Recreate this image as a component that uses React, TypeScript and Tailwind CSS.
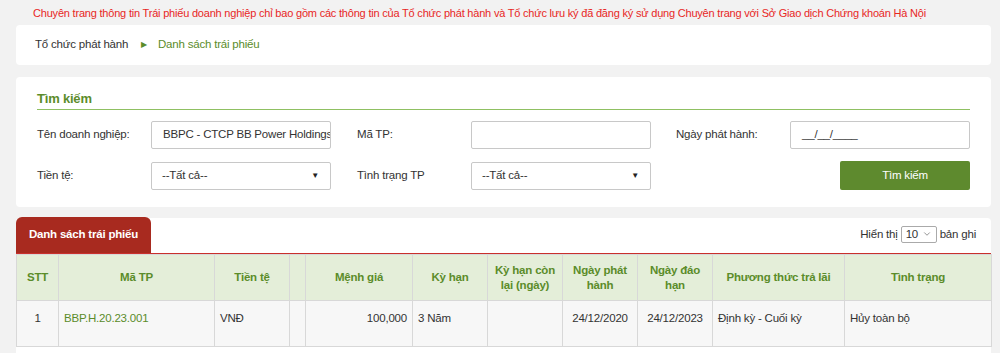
import { ChevronDown } from "lucide-react";

const cols = [
  { label: "STT", w: 42 },
  { label: "Mã TP", w: 156 },
  { label: "Tiền tệ", w: 75 },
  { label: "", w: 16 },
  { label: "Mệnh giá", w: 107 },
  { label: "Kỳ hạn", w: 75 },
  { label: "Kỳ hạn còn lại (ngày)", w: 75 },
  { label: "Ngày phát hành", w: 75 },
  { label: "Ngày đáo hạn", w: 75 },
  { label: "Phương thức trả lãi", w: 132 },
  { label: "Tình trạng", w: 147 },
];

function Field({ value }: { value?: string }) {
  return (
    <div className="flex h-[28px] w-[180px] items-center overflow-hidden whitespace-nowrap rounded-[2px] border border-[#c8c8c8] bg-white px-[11px] text-[#333]">
      {value ?? ""}
    </div>
  );
}

function Select({ value }: { value: string }) {
  return (
    <div className="flex h-[28px] w-[180px] items-center justify-between rounded-[2px] border border-[#c8c8c8] bg-white pl-[10px] pr-[11px] text-[#333]">
      <span>{value}</span>
      <span className="text-[8px] leading-none text-[#222]">▼</span>
    </div>
  );
}

export default function App() {
  return (
    <div className="min-h-[353px] bg-[#f2f2f2] font-['Liberation_Sans',Arial,sans-serif] text-[11.5px] tracking-[-0.2px] text-[#333]">
      <p className="whitespace-nowrap pl-[33px] pt-[6px] text-[11px] leading-[14px] text-[#e8271f]">
        Chuyên trang thông tin Trái phiếu doanh nghiệp chỉ bao gồm các thông tin của Tổ chức phát hành và Tổ chức lưu ký đã đăng ký sử dụng Chuyên trang với Sở Giao dịch Chứng khoán Hà Nội
      </p>

      <div className="mx-[16px] mt-[5px] flex h-[40px] w-[975px] items-center rounded-[4px] bg-white pl-[19px]">
        <span>Tổ chức phát hành</span>
        <span className="ml-[13px] mr-[11px] text-[8px] text-[#5b8c2a]">▶</span>
        <span className="text-[#5b8c2a]">Danh sách trái phiếu</span>
      </div>

      <div className="mx-[16px] mt-[12px] h-[130px] w-[975px] rounded-[4px] bg-white px-[21px] pt-[14px]">
        <div className="border-b border-[#8fc062] pb-[2px] text-[13px] font-bold leading-[16px] text-[#5b8c2a]">
          Tìm kiếm
        </div>
        <div className="mt-[11px] flex items-center">
          <span className="w-[114px]">Tên doanh nghiệp:</span>
          <Field value="BBPC - CTCP BB Power Holdings" />
          <span className="ml-[26px] w-[114px]">Mã TP:</span>
          <Field />
          <span className="ml-[25px] w-[114px]">Ngày phát hành:</span>
          <Field value="__/__/____" />
        </div>
        <div className="mt-[12px] flex items-center">
          <span className="w-[114px]">Tiền tệ:</span>
          <Select value="--Tất cả--" />
          <span className="ml-[26px] w-[114px]">Tình trạng TP</span>
          <Select value="--Tất cả--" />
          <button className="ml-auto h-[29px] w-[130px] rounded-[2px] bg-[#5e8a2e] text-white">
            Tìm kiếm
          </button>
        </div>
      </div>

      <div className="mx-[16px] mt-[11px] w-[975px] rounded-t-[4px] bg-white pb-[20px]">
        <div className="flex h-[36px] items-end justify-between border-b border-[#c9302c]">
          <div className="flex h-[36px] w-[135px] items-center justify-center rounded-t-[6px] bg-[#a82a1f] font-bold text-white">
            Danh sách trái phiếu
          </div>
          <div className="mb-[10px] mr-[15px] flex items-center">
            <span>Hiển thị</span>
            <div className="ml-[3px] mr-[3px] flex h-[17px] w-[36px] items-center justify-between rounded-[2px] border border-[#aaa] px-[4px]">
              <span>10</span>
              <ChevronDown size={10} strokeWidth={1.5} className="text-[#555]" />
            </div>
            <span>bản ghi</span>
          </div>
        </div>
        <table className="w-[975px] table-fixed border-collapse">
          <colgroup>
            {cols.map((c, i) => (
              <col key={i} style={{ width: c.w }} />
            ))}
          </colgroup>
          <thead>
            <tr className="h-[46px] bg-[#e4eed9]">
              {cols.map((c, i) => (
                <th
                  key={i}
                  className="border border-[#d8d8d8] px-[3px] text-center font-bold leading-[15px] text-[#5b8c2a]"
                >
                  {c.label}
                </th>
              ))}
            </tr>
          </thead>
          <tbody>
            <tr className="h-[46px] bg-[#f7f7f7] align-top leading-[14px]">
              <td className="border border-[#d8d8d8] pt-[10px] text-center">1</td>
              <td className="border border-[#d8d8d8] pl-[5px] pt-[10px] text-[#5b8c2a]">BBP.H.20.23.001</td>
              <td className="border border-[#d8d8d8] pl-[5px] pt-[10px]">VNĐ</td>
              <td className="border border-[#d8d8d8]"></td>
              <td className="border border-[#d8d8d8] pr-[5px] pt-[10px] text-right">100,000</td>
              <td className="border border-[#d8d8d8] pl-[5px] pt-[10px]">3 Năm</td>
              <td className="border border-[#d8d8d8]"></td>
              <td className="border border-[#d8d8d8] pt-[10px] text-center">24/12/2020</td>
              <td className="border border-[#d8d8d8] pt-[10px] text-center">24/12/2023</td>
              <td className="border border-[#d8d8d8] pl-[5px] pt-[10px]">Định kỳ - Cuối kỳ</td>
              <td className="border border-[#d8d8d8] pl-[5px] pt-[10px]">Hủy toàn bộ</td>
            </tr>
          </tbody>
        </table>
      </div>
    </div>
  );
}
